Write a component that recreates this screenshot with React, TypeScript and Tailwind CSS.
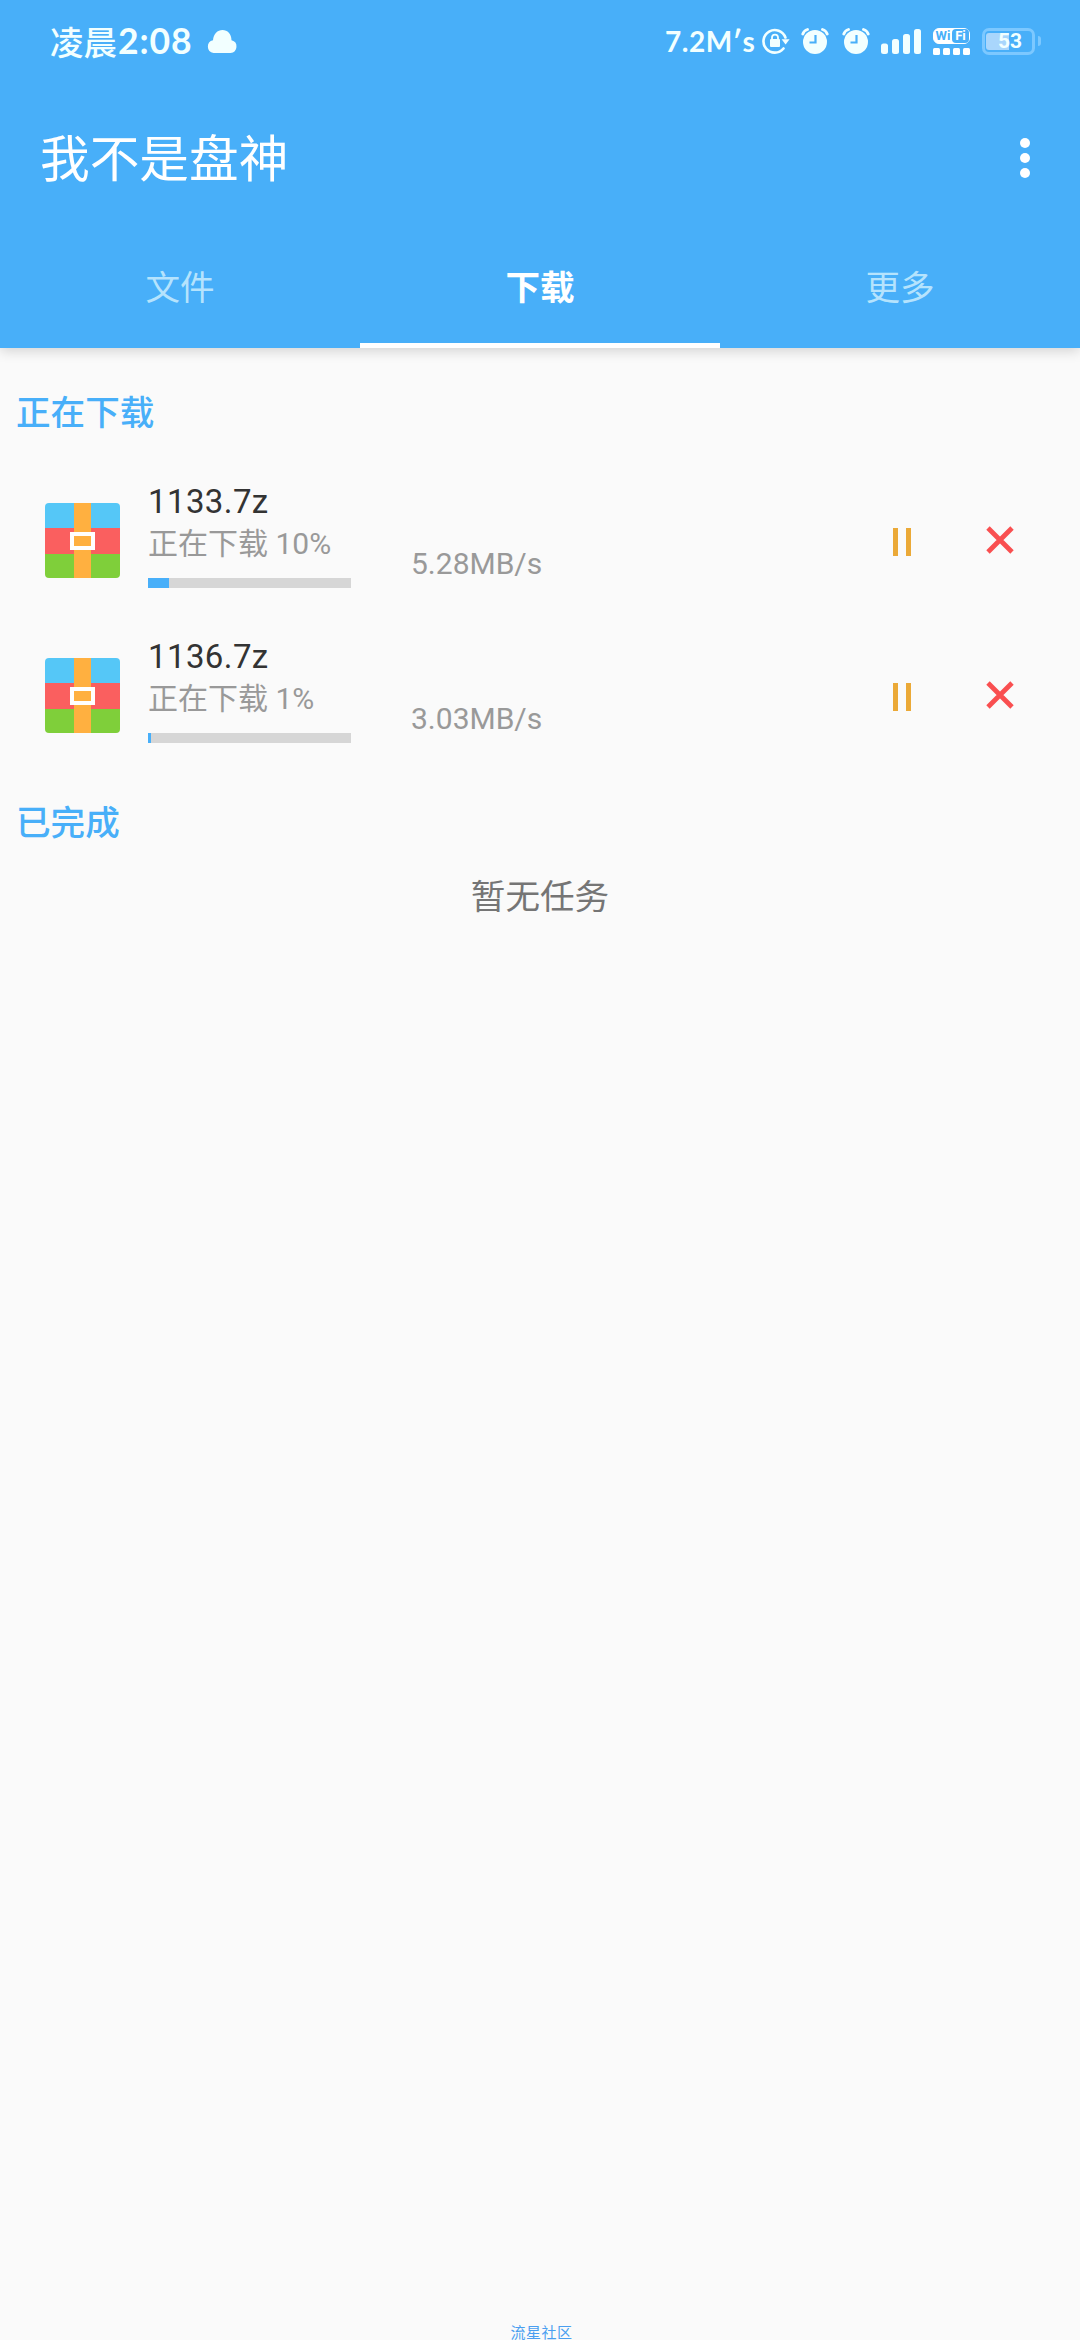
import React, { useState } from 'react';

interface Task {
    name: string;
    percent: number;
    filled: number;
    speed: string;
}

const tasks: Task[] = [
    { name: '1133.7z', percent: 10, filled: 21, speed: '5.28MB/s' },
    { name: '1136.7z', percent: 1, filled: 3, speed: '3.03MB/s' },
];

const tabs = ['文件', '下载', '更多'];

const CloudIcon = () => (
    <svg width="30" height="23" viewBox="0 0 30 23" fill="currentColor">
        <path d="M6.5 23A6.5 6.5 0 0 1 6 10.2C6.5 4 10.5 0 15.5 0s9 4 9 10.2A6.5 6.5 0 0 1 23.5 23z" />
    </svg>
);

const RotationLockIcon = () => (
    <svg width="28" height="26" viewBox="0 0 28 26" fill="none" stroke="currentColor">
        <path d="M21.5 20.5A11.3 11.3 0 1 1 23.4 9.5" strokeWidth="2.6" strokeLinecap="round" />
        <path d="M19.6 11.2h8l-4 5.2z" fill="currentColor" stroke="none" />
        <rect x="8" y="11" width="10" height="8" rx="1" fill="currentColor" stroke="none" />
        <path d="M10 12V9.6a3 3 0 0 1 6 0V12" strokeWidth="1.8" />
    </svg>
);

const AlarmIcon = () => (
    <svg width="28" height="26" viewBox="0 0 28 26" fill="none">
        <circle cx="14" cy="14" r="12" fill="currentColor" />
        <path d="M1.8 6A7 7 0 0 1 6.5 1.5M26.2 6A7 7 0 0 0 21.5 1.5" stroke="currentColor" strokeWidth="2.8" strokeLinecap="round" />
        <path d="M14.5 7v7.5H8.5" stroke="#48aff9" strokeWidth="2.2" />
    </svg>
);

const SignalIcon = () => (
    <svg width="40" height="25" viewBox="0 0 40 25" fill="currentColor">
        <rect x="0" y="14.5" width="7" height="10.5" rx="2.5" />
        <rect x="11" y="10" width="7" height="15" rx="2.5" />
        <rect x="22" y="5" width="7" height="20" rx="2.5" />
        <rect x="33" y="0" width="7" height="25" rx="2.5" />
    </svg>
);

const WifiIcon = () => (
    <div className="flex w-[37px] flex-col gap-[4px]">
        <div className="flex h-[16px] rounded-[6px] border-[1.5px] border-white bg-white font-[Roboto,sans-serif] text-[13px] leading-[14px] font-bold text-[#48aff9]">
            <span className="w-[18px] text-center">Wi</span>
            <span className="flex-1 rounded-[4px] bg-[#48aff9] text-center text-white">Fi</span>
        </div>
        <div className="flex justify-between">
            {[0, 1, 2, 3].map((n) => (
                <span key={n} className="h-[7px] w-[7px] rounded-[1.5px] bg-white" />
            ))}
        </div>
    </div>
);

const BatteryIcon = () => (
    <div className="flex items-center gap-[3px]">
        <div className="relative flex h-[27px] w-[53px] items-center justify-center rounded-[7px] border-[3px] border-[#7cc8ff]">
            <div className="absolute top-[2px] left-[1px] h-[17px] w-[23px] rounded-l-[3px] bg-[#a9d6fc]" />
            <span className="relative pl-[3px] font-[Roboto,sans-serif] text-[21px] leading-none font-bold">53</span>
        </div>
        <div className="h-[10px] w-[3px] rounded-r-full bg-[#7cc8ff]" />
    </div>
);

const StatusBar = () => (
    <div className="flex h-[82px] items-center pl-[50px] text-[#f2ffff]">
        <span className="flex w-[157px] items-center leading-none whitespace-nowrap">
            <span className="font-['Noto_Sans_CJK_SC',sans-serif] text-[33.5px] font-medium">凌晨</span>
            <span className="pl-px font-[Lato,sans-serif] text-[35.5px] font-bold tracking-[0.9px]">2:08</span>
        </span>
        <CloudIcon />
        <div className="flex flex-1 items-center pl-[428px]">
            <span className="w-[97px] font-[Lato,sans-serif] text-[28px] leading-none font-bold tracking-[0.5px] whitespace-nowrap">7.2M′s</span>
            <RotationLockIcon />
            <span className="ml-[11px]"><AlarmIcon /></span>
            <span className="ml-[13px]"><AlarmIcon /></span>
            <span className="ml-[11px]"><SignalIcon /></span>
            <span className="ml-[12px]"><WifiIcon /></span>
            <span className="ml-[12px]"><BatteryIcon /></span>
        </div>
    </div>
);

const ArchiveIcon = () => (
    <svg width="75" height="75" viewBox="0 0 75 75">
        <path d="M0 25V4a4 4 0 0 1 4-4h67a4 4 0 0 1 4 4v21z" fill="#55c7f7" />
        <path d="M0 25h75v26H0z" fill="#fa5f5f" />
        <path d="M0 51h75v20a4 4 0 0 1-4 4H4a4 4 0 0 1-4-4z" fill="#7fcf3a" />
        <path d="M29 0h17v75H29z" fill="#ffb040" />
        <rect x="27" y="31" width="21" height="14" fill="#ffb040" stroke="#fff" strokeWidth="4" />
    </svg>
);

const PauseIcon = () => (
    <svg width="18" height="28" viewBox="0 0 18 28" fill="#eba937">
        <path d="M0 0h5v28H0zM13 0h5v28h-5z" />
    </svg>
);

const CloseIcon = () => (
    <svg width="28" height="28" viewBox="0 0 28 28" stroke="#f94f50" strokeWidth="4.8">
        <path d="M2 2l24 24M26 2L2 26" />
    </svg>
);

const TaskRow: React.FC<{ task: Task }> = ({ task }) => (
    <div className="flex h-[155px] pl-[45px]">
        <div className="mt-[40px] w-[103px]">
            <ArchiveIcon />
        </div>
        <div className="w-[203px] pt-[18px]">
            <div className="h-[41px] text-[33px] leading-[42px] tracking-[0.4px] text-[#333]">{task.name}</div>
            <div className="h-[44px] text-[30px] leading-[44px] whitespace-nowrap text-[#999]">
                正在下载 {task.percent}%
            </div>
            <div className="mt-[12px] h-[10px] bg-[#d6d6d6]">
                <div className="h-full bg-[#48aff9]" style={{ width: task.filled }} />
            </div>
        </div>
        <div className="mt-[81px] ml-[60px] w-[482px] text-[30px] leading-[40px] text-[#999]">{task.speed}</div>
        <button className="mt-[65px] flex h-[28px] w-[93px]">
            <PauseIcon />
        </button>
        <button className="mt-[63px] h-[28px]">
            <CloseIcon />
        </button>
    </div>
);

const App: React.FC = () => {
    const [active, setActive] = useState(1);

    return (
        <div className="flex h-[2340px] w-[1080px] flex-col overflow-hidden bg-[#fafafa] font-['Roboto','Noto_Sans_CJK_SC',sans-serif]">
            {/* Header */}
            <header className="h-[348px] bg-[#48aff9] shadow-[0_3px_12px_rgba(0,0,0,0.16)]">
                <StatusBar />
                <div className="flex h-[154px] items-center justify-between pr-[50px] pl-[40px]">
                    <h1 className="pt-[3px] text-[49.7px] leading-none text-white">我不是盘神</h1>
                    <svg className="mb-[2px]" width="10" height="40" viewBox="0 0 10 40" fill="#fff">
                        <circle cx="5" cy="5" r="5" />
                        <circle cx="5" cy="20" r="5" />
                        <circle cx="5" cy="35" r="5" />
                    </svg>
                </div>
                <div className="flex h-[112px]">
                    {tabs.map((tab, index) => (
                        <button
                            key={tab}
                            onClick={() => setActive(index)}
                            className={`flex-1 border-b-[5px] pb-px text-[34.6px] ${
                                active === index
                                    ? 'border-white font-bold text-white'
                                    : 'border-transparent text-[#b5e3fd]'
                            }`}
                        >
                            {tab}
                        </button>
                    ))}
                </div>
            </header>

            {/* Downloads */}
            <main className="flex-1 pt-[40px]">
                <h2 className="h-[50px] pl-[16px] text-[34.6px] leading-[50px] font-medium text-[#48aff9]">正在下载</h2>
                <div className="pt-[25px]">
                    {tasks.map((task) => (
                        <TaskRow key={task.name} task={task} />
                    ))}
                </div>
                <h2 className="mt-[25px] h-[50px] pl-[16px] text-[34.6px] leading-[50px] font-medium text-[#48aff9]">已完成</h2>
                <p className="mt-[24px] text-center text-[34.6px] leading-[50px] text-[#757575]">暂无任务</p>
            </main>

            <footer className="h-[15px] pl-[3px] text-center text-[15px] leading-[16px] tracking-[0.5px] text-[#4a9ff0]">流星社区</footer>
        </div>
    );
};

export default App;
